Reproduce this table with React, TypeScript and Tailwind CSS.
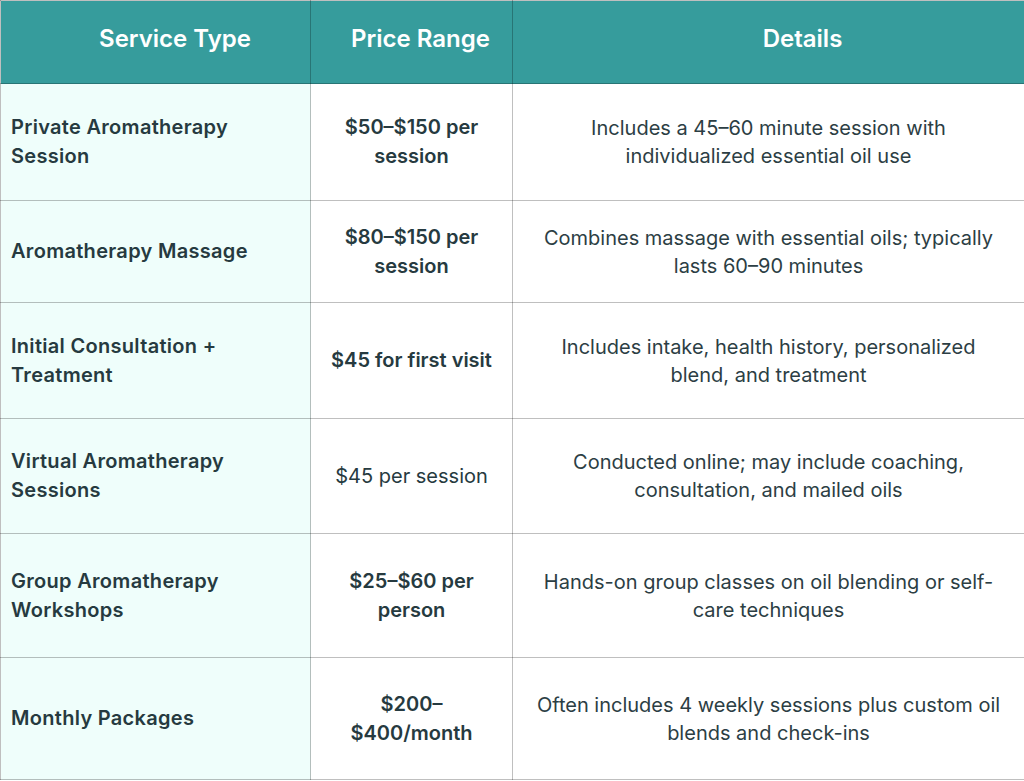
import React from "react";

type Row = { service: string[]; price: string[]; priceBold: boolean; details: string[]; h: string };

const rows: Row[] = [
  { service: ["Private Aromatherapy", "Session"], price: ["$50–$150 per", "session"], priceBold: true, details: ["Includes a 45–60 minute session with", "individualized essential oil use"], h: "h-[117px]" },
  { service: ["Aromatherapy Massage"], price: ["$80–$150 per", "session"], priceBold: true, details: ["Combines massage with essential oils; typically", "lasts 60–90 minutes"], h: "h-[102px]" },
  { service: ["Initial Consultation +", "Treatment"], price: ["$45 for first visit"], priceBold: true, details: ["Includes intake, health history, personalized", "blend, and treatment"], h: "h-[116px]" },
  { service: ["Virtual Aromatherapy", "Sessions"], price: ["$45 per session"], priceBold: false, details: ["Conducted online; may include coaching,", "consultation, and mailed oils"], h: "h-[115px]" },
  { service: ["Group Aromatherapy", "Workshops"], price: ["$25–$60 per", "person"], priceBold: true, details: ["Hands-on group classes on oil blending or self-", "care techniques"], h: "h-[124px]" },
  { service: ["Monthly Packages"], price: ["$200–", "$400/month"], priceBold: true, details: ["Often includes 4 weekly sessions plus custom oil", "blends and check-ins"], h: "h-[122px]" },
];

function Lines({ lines }: { lines: string[] }) {
  return (
    <>
      {lines.map((l, i) => (
        <span key={i} className="block whitespace-nowrap">
          {l}
        </span>
      ))}
    </>
  );
}

export default function App() {
  return (
    <div className="w-[1024px] h-[781px] bg-white" style={{ fontFamily: "Inter, 'Noto Sans', sans-serif" }}>
      <table className="w-[1024px] table-fixed border-collapse text-[#263a40]">
        <colgroup>
          <col className="w-[310px]" />
          <col className="w-[202px]" />
          <col className="w-[512px]" />
        </colgroup>
        <thead>
          <tr className="h-[83px] bg-[#369c9c] text-white">
            <th className="border border-black/25 pl-[39px] pb-[7px] text-center text-[24px] font-semibold">Service Type</th>
            <th className="border border-black/25 pl-[18px] pb-[7px] text-center text-[24px] font-semibold">Price Range</th>
            <th className="border border-black/25 pl-[68px] pb-[7px] text-center text-[24px] font-semibold">Details</th>
          </tr>
        </thead>
        <tbody>
          {rows.map((r) => (
            <tr key={r.service.join(" ")} className={r.h}>
              <td className="border border-black/25 bg-[#effefb] pl-[10px] pr-[20px] text-left text-[20px] font-semibold leading-[29px] tracking-[0.3px]">
                <Lines lines={r.service} />
              </td>
              <td className={`border border-black/25 px-[8px] text-center text-[20px] leading-[29px] ${r.priceBold ? "font-semibold" : "font-normal"}`}>
                <Lines lines={r.price} />
              </td>
              <td className="border border-black/25 px-[8px] text-center text-[20px] font-normal leading-[28px] text-[#2c3e44]">
                <Lines lines={r.details} />
              </td>
            </tr>
          ))}
        </tbody>
      </table>
    </div>
  );
}
